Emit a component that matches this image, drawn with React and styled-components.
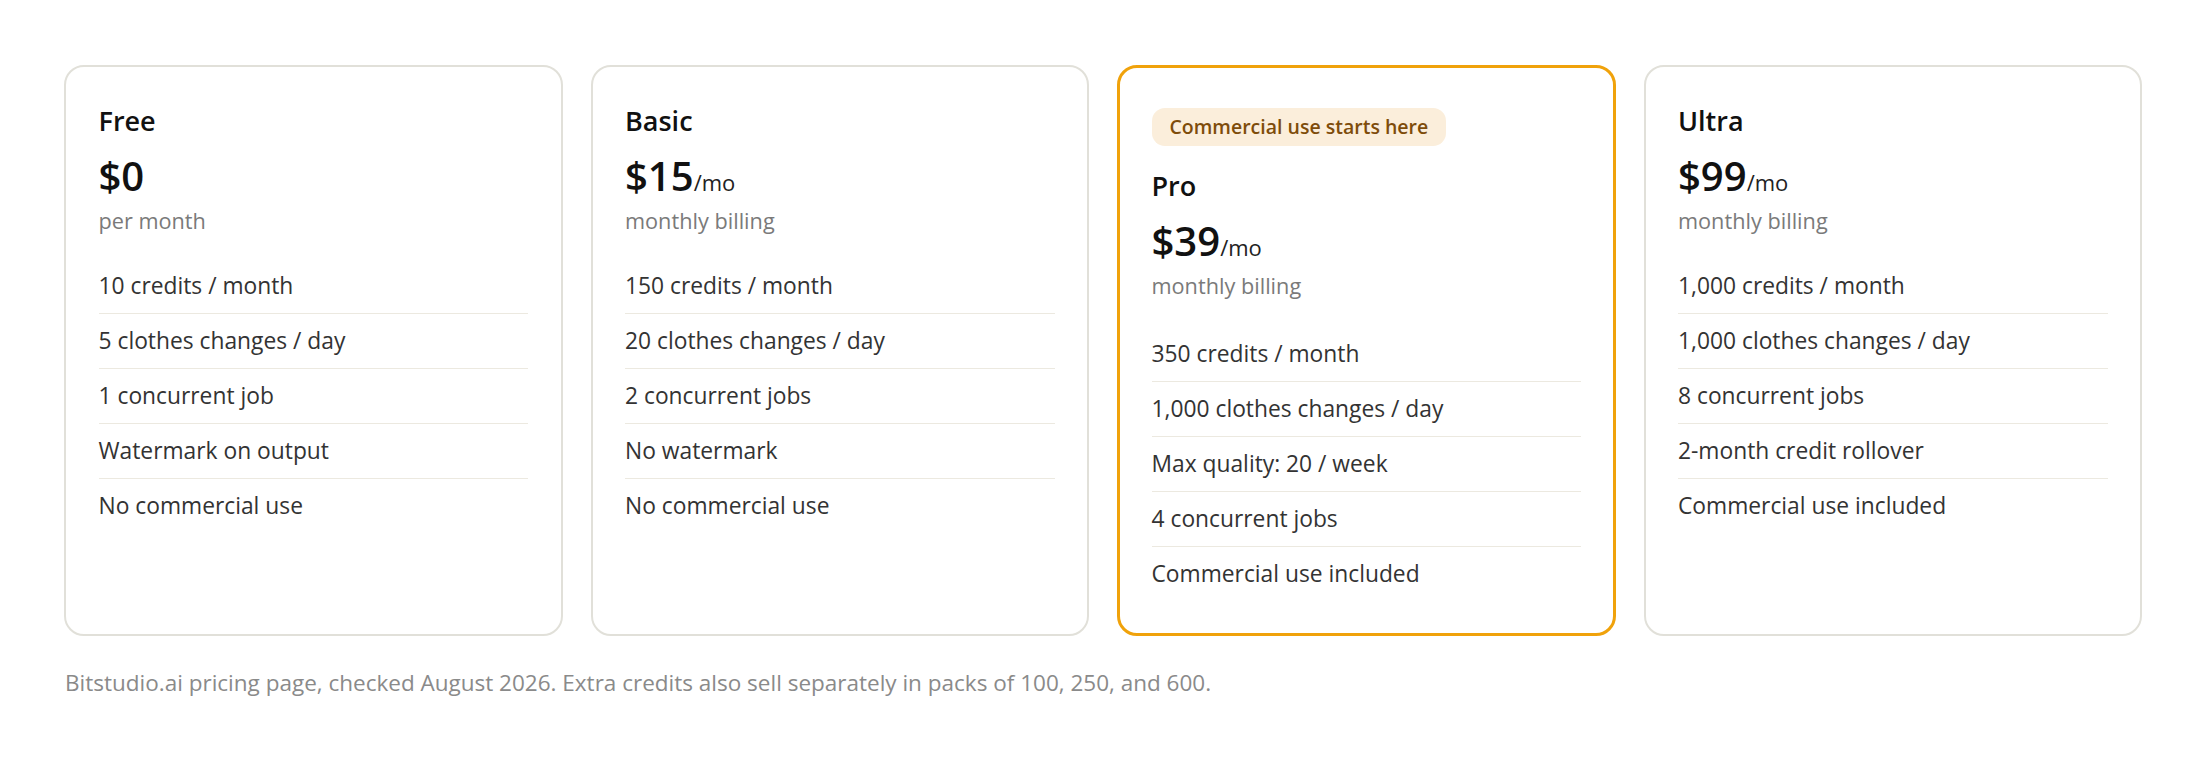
import React from "react";
import styled, { createGlobalStyle } from "styled-components";

const GlobalStyle = createGlobalStyle`
  html, body {
    margin: 0;
    padding: 0;
    background: #ffffff;
  }
  body {
    font-family: "Open Sans", "Noto Sans", "Liberation Sans", sans-serif;
    color: #222;
  }
`;

const plans = [
  {
    name: "Free",
    price: "$0",
    note: "per month",
    features: [
      "10 credits / month",
      "5 clothes changes / day",
      "1 concurrent job",
      "Watermark on output",
      "No commercial use",
    ],
  },
  {
    name: "Basic",
    price: "$15",
    per: "/mo",
    note: "monthly billing",
    features: [
      "150 credits / month",
      "20 clothes changes / day",
      "2 concurrent jobs",
      "No watermark",
      "No commercial use",
    ],
  },
  {
    name: "Pro",
    price: "$39",
    per: "/mo",
    note: "monthly billing",
    badge: "Commercial use starts here",
    featured: true,
    features: [
      "350 credits / month",
      "1,000 clothes changes / day",
      "Max quality: 20 / week",
      "4 concurrent jobs",
      "Commercial use included",
    ],
  },
  {
    name: "Ultra",
    price: "$99",
    per: "/mo",
    note: "monthly billing",
    features: [
      "1,000 credits / month",
      "1,000 clothes changes / day",
      "8 concurrent jobs",
      "2-month credit rollover",
      "Commercial use included",
    ],
  },
];

const App = () => {
  return (
    <Page>
      <GlobalStyle />
      <Grid>
        {plans.map((plan) => (
          <Card key={plan.name} featured={plan.featured}>
            {plan.badge && <Badge>{plan.badge}</Badge>}
            <Title>{plan.name}</Title>
            <Price>
              {plan.price}
              {plan.per && <Per>{plan.per}</Per>}
            </Price>
            <Note>{plan.note}</Note>
            <Features featured={plan.featured}>
              {plan.features.map((f) => (
                <Feature key={f}>{f}</Feature>
              ))}
            </Features>
          </Card>
        ))}
      </Grid>
      <Footnote>
        Bitstudio.ai pricing page, checked August 2026. Extra credits also sell
        separately in packs of 100, 250, and 600.
      </Footnote>
    </Page>
  );
};

const Page = styled.div`
  padding: 65px 66px 40px 64px;
`;

const Grid = styled.div`
  display: grid;
  grid-template-columns: repeat(4, 1fr);
  gap: 28px;
  align-items: stretch;
`;

const noFeatured = {
  shouldForwardProp: (prop) => prop !== "featured",
};

const Card = styled.div.withConfig(noFeatured)`
  display: flex;
  flex-direction: column;
  align-items: flex-start;
  background: #fff;
  border: ${(p) => (p.featured ? "3px solid #f0a20b" : "2px solid #e1e0d9")};
  border-radius: 20px;
  padding: ${(p) => (p.featured ? "31.5px 31.5px 32px" : "32.5px")};
`;

const Badge = styled.div`
  margin: 8px 0 19px;
  padding: 0 18px;
  height: 38px;
  line-height: 38px;
  border-radius: 13px;
  background: #fbeedb;
  color: #7e4c0a;
  font-size: 19.5px;
  font-weight: 600;
`;

const Title = styled.div`
  font-size: 27px;
  font-weight: 600;
  line-height: 41px;
  color: #111;
`;

const Price = styled.div`
  margin-top: 12px;
  font-size: 40px;
  font-weight: 600;
  line-height: 46px;
  color: #111;
`;

const Per = styled.span`
  font-size: 22px;
  font-weight: 400;
  line-height: 1;
  color: #222;
`;

const Note = styled.div`
  margin-top: 5px;
  font-size: 21.7px;
  line-height: 33px;
  color: #7a7a7a;
`;

const Features = styled.ul.withConfig(noFeatured)`
  list-style: none;
  margin: ${(p) => (p.featured ? "25px" : "22px")} 0 0;
  padding: 0;
  align-self: stretch;
`;

const Feature = styled.li`
  padding: 10.5px 0;
  font-size: 22.8px;
  line-height: 33px;
  color: #333;
  border-bottom: 1.5px solid #ece9e0;

  &:last-child {
    border-bottom: none;
  }
`;

const Footnote = styled.p`
  margin: 31px 0 0 1px;
  font-size: 22.5px;
  line-height: 31px;
  color: #8a8a8a;
`;

export default App;
